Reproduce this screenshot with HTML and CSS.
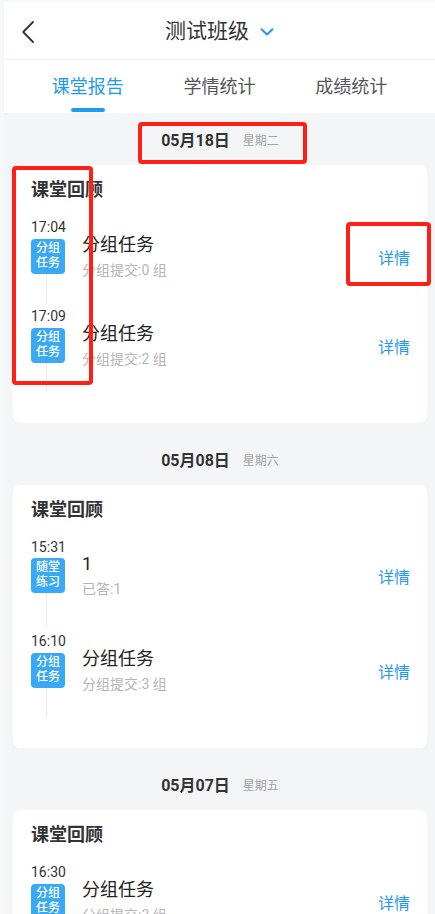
FILE: index.html
```html
<!DOCTYPE html>
<html lang="zh-CN">
<head>
    <meta charset="UTF-8">
    <meta name="viewport" content="width=device-width, initial-scale=1.0">
    <title>课堂报告</title>
    <link rel="stylesheet" href="styles.css">
</head>
<body>
    <div class="page">
        <!-- Top bar -->
        <header class="topbar">
            <span class="back">
                <svg width="12" height="22" viewBox="0 0 12 22"><path d="M11 1 L1.2 11 L11 21" fill="none" stroke="#333" stroke-width="1.8" stroke-linecap="round" stroke-linejoin="round"/></svg>
            </span>
            <div class="title-group">
                <span class="title">测试班级</span>
                <svg class="caret" width="14" height="8" viewBox="0 0 14 8"><path d="M1.5 1.2 L7 6.5 L12.5 1.2" fill="none" stroke="#1e9af0" stroke-width="2" stroke-linecap="round" stroke-linejoin="round"/></svg>
            </div>
            <span></span>
        </header>

        <!-- Tabs -->
        <nav class="tabs">
            <div class="tab active">课堂报告</div>
            <div class="tab">学情统计</div>
            <div class="tab">成绩统计</div>
        </nav>

        <!-- Day list -->
        <main class="feed">
            <section class="day">
                <div class="day-head"><span class="day-date">05月18日</span><span class="day-week">星期二</span></div>
                <div class="card">
                    <h3 class="card-title">课堂回顾</h3>
                    <ul class="timeline">
                        <li class="entry">
                            <div class="entry-time">17:04</div>
                            <div class="entry-row">
                                <span class="badge">分组<br>任务</span>
                                <div class="entry-info">
                                    <div class="entry-title">分组任务</div>
                                    <div class="entry-sub">分组提交:0 组</div>
                                </div>
                                <a class="entry-link">详情</a>
                            </div>
                            <div class="entry-line"></div>
                        </li>
                        <li class="entry">
                            <div class="entry-time">17:09</div>
                            <div class="entry-row">
                                <span class="badge">分组<br>任务</span>
                                <div class="entry-info">
                                    <div class="entry-title">分组任务</div>
                                    <div class="entry-sub">分组提交:2 组</div>
                                </div>
                                <a class="entry-link">详情</a>
                            </div>
                            <div class="entry-line"></div>
                        </li>
                    </ul>
                </div>
            </section>

            <section class="day">
                <div class="day-head"><span class="day-date">05月08日</span><span class="day-week">星期六</span></div>
                <div class="card">
                    <h3 class="card-title">课堂回顾</h3>
                    <ul class="timeline">
                        <li class="entry entry-quiz">
                            <div class="entry-time">15:31</div>
                            <div class="entry-row">
                                <span class="badge">随堂<br>练习</span>
                                <div class="entry-info">
                                    <div class="entry-title">1</div>
                                    <div class="entry-sub">已答:1</div>
                                </div>
                                <a class="entry-link">详情</a>
                            </div>
                            <div class="entry-line"></div>
                        </li>
                        <li class="entry">
                            <div class="entry-time">16:10</div>
                            <div class="entry-row">
                                <span class="badge">分组<br>任务</span>
                                <div class="entry-info">
                                    <div class="entry-title">分组任务</div>
                                    <div class="entry-sub">分组提交:3 组</div>
                                </div>
                                <a class="entry-link">详情</a>
                            </div>
                            <div class="entry-line"></div>
                        </li>
                    </ul>
                </div>
            </section>

            <section class="day">
                <div class="day-head"><span class="day-date">05月07日</span><span class="day-week">星期五</span></div>
                <div class="card">
                    <h3 class="card-title">课堂回顾</h3>
                    <ul class="timeline">
                        <li class="entry">
                            <div class="entry-time">16:30</div>
                            <div class="entry-row">
                                <span class="badge">分组<br>任务</span>
                                <div class="entry-info">
                                    <div class="entry-title">分组任务</div>
                                    <div class="entry-sub">分组提交:3 组</div>
                                </div>
                                <a class="entry-link">详情</a>
                            </div>
                            <div class="entry-line"></div>
                        </li>
                    </ul>
                </div>
            </section>
        </main>
    </div>

    <!-- annotation boxes drawn over the screenshot -->
    <div class="mark mark-date"></div>
    <div class="mark mark-time"></div>
    <div class="mark mark-link"></div>
</body>
</html>
```

FILE: styles.css
```css
body {
    margin: 0;
    position: relative;
    height: 914px;
    overflow: hidden;
    background-color: #f7f8fa;
    font-family: Roboto, "Noto Sans CJK SC", sans-serif;
    color: #333;
}
.page {
    margin: 2px 0 0 4px;
    background-color: #fff;
}

/* top bar */
.topbar {
    display: grid;
    grid-template-columns: 1fr auto 1fr;
    align-items: center;
    height: 58px;
    padding-top: 1px;
    box-sizing: border-box;
    border-bottom: 1px solid #f1f1f3;
}
.back {
    display: flex;
    padding-left: 18px;
    padding-top: 1px;
}
.title-group {
    display: flex;
    align-items: center;
    gap: 11px;
}
.title {
    font-size: 21px;
    line-height: 28px;
    color: #333;
}
.caret {
    margin-top: 1px;
}

/* tabs */
.tabs {
    display: flex;
    padding: 0 18px;
    height: 53px;
}
.tab {
    flex: 1;
    position: relative;
    text-align: center;
    font-size: 18px;
    line-height: 24px;
    padding-top: 15px;
    color: #555;
}
.tab.active {
    color: #1e9af0;
}
.tab.active::after {
    content: "";
    position: absolute;
    left: 50%;
    bottom: 1px;
    width: 34px;
    height: 4px;
    margin-left: -17px;
    border-radius: 2px;
    background-color: #1e9af0;
}

/* feed */
.feed {
    background-color: #f4f5f7;
    padding: 0 8px 0 9px;
}
.day {
    margin-bottom: 10px;
}
.day-head {
    display: flex;
    justify-content: center;
    align-items: center;
    gap: 13px;
    height: 52px;
}
.day-date {
    font-size: 16px;
    font-weight: bold;
    color: #333;
}
.day-week {
    font-size: 12px;
    color: #a3a3a3;
}
.card {
    background-color: #fff;
    border-radius: 8px;
    padding: 14px 17px 28px 18px;
}
.card-title {
    margin: 0;
    font-size: 18px;
    line-height: 22px;
    font-weight: bold;
    color: #333;
}

/* timeline */
.timeline {
    list-style: none;
    margin: 16px 0 0;
    padding: 0;
}
.entry-time {
    font-size: 14px;
    line-height: 20px;
    color: #333;
}
.entry-row {
    display: flex;
    align-items: center;
    height: 35px;
    margin-top: 2px;
}
.entry-quiz .entry-row {
    margin-top: 1px;
}
.badge {
    width: 34px;
    height: 35px;
    box-sizing: border-box;
    padding-top: 2px;
    border-radius: 4px;
    background-color: #39a9f5;
    color: #fff;
    font-size: 12px;
    line-height: 15px;
    font-weight: 500;
    text-align: center;
    flex-shrink: 0;
}
.entry-info {
    flex: 1;
    margin-left: 17px;
}
.entry-title {
    font-size: 18px;
    line-height: 22px;
    color: #222;
}
.entry-sub {
    margin-top: 4px;
    font-size: 14px;
    line-height: 20px;
    color: #b5b5b5;
}
.entry-link {
    font-size: 16px;
    color: #1e9af0;
    margin-top: 1px;
}
.entry-line {
    width: 1px;
    height: 29px;
    margin: 0 0 3px 15px;
    background-color: #ebebeb;
}
.entry-quiz .entry-line {
    height: 35px;
}

/* red annotation boxes */
.mark {
    position: absolute;
    border: 4px solid #ff1f14;
    border-radius: 4px;
    box-sizing: border-box;
}
.mark-date {
    left: 138px;
    top: 122px;
    width: 169px;
    height: 42px;
}
.mark-time {
    left: 12px;
    top: 166px;
    width: 81px;
    height: 219px;
}
.mark-link {
    left: 346px;
    top: 222px;
    width: 85px;
    height: 64px;
}
```
